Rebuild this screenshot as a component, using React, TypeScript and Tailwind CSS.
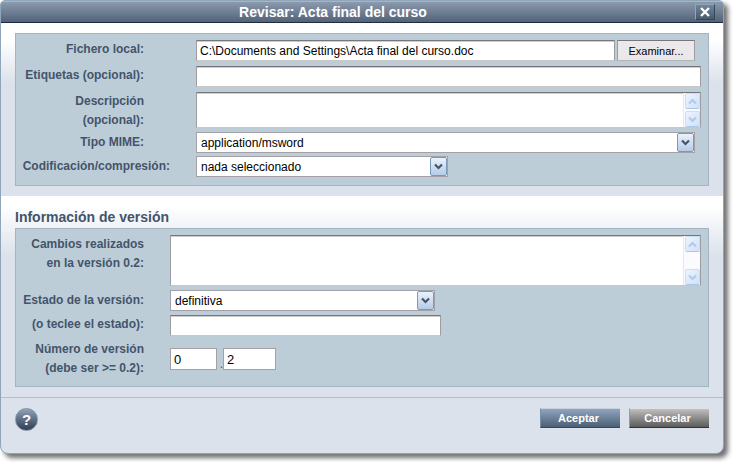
import React, { useState } from 'react'

const fieldClass =
  'block bg-white border border-t-[#77777b] border-l-[#9d9da1] border-r-[#9d9da1] border-b-[#c9c6c3] rounded-none text-[12px] leading-[16px] text-black outline-none shadow-[inset_0_1px_0_#cfccc9]'

const boxClass = 'border border-[#a3b5c3] bg-[#bdcdd7]'

const labelClass = 'shrink-0 pl-1 text-right text-[12px] leading-[19px] font-bold text-[#43546b]'

const versionClass =
  'h-[22px] border border-[#a3a1a5] bg-white px-[3px] text-[13px] leading-4 text-black outline-none'

function Chevron({ up = false, color }: { up?: boolean; color: string }) {
  return (
    <svg width="9" height="7" viewBox="0 0 9 7" fill="none" aria-hidden="true">
      <path d={up ? 'M1 5.5 4.5 2 8 5.5' : 'M1 1.5 4.5 5 8 1.5'} stroke={color} strokeWidth="2.2" />
    </svg>
  )
}

interface SelectProps {
  id: string
  options: string[]
  className: string
}

function Select({ id, options, className }: SelectProps) {
  return (
    <div className={`relative ${className}`}>
      <select
        id={id}
        className="block h-[21px] w-full appearance-none rounded-none border border-[#a3a1a5] bg-white pr-5 pl-1 text-[12px] leading-[16px] text-black outline-none"
      >
        {options.map((o) => (
          <option key={o}>{o}</option>
        ))}
      </select>
      <span className="pointer-events-none absolute top-px right-px flex h-[19px] w-[17px] items-center justify-center rounded-[2px] border border-[#7b98b9] bg-linear-to-b from-[#eaf2fd] to-[#b4cbe8]">
        <Chevron color="#485465" />
      </span>
    </div>
  )
}

function ScrollButton({ up = false }: { up?: boolean }) {
  return (
    <span className="flex h-4 w-[15px] items-center justify-center rounded-[2px] border border-[#cbdef5] border-b-[#abc8e8] bg-linear-to-br from-[#edf4ff] to-[#cfe1fa]">
      <Chevron up={up} color="#b3cae6" />
    </span>
  )
}

function TextArea({ id, className }: { id: string; className: string }) {
  return (
    <div className="relative min-w-0 flex-1">
      <textarea id={id} className={`${fieldClass} w-full resize-none pr-5 pl-1 ${className}`} />
      <span className="pointer-events-none absolute top-px right-px bottom-px flex w-[17px] flex-col items-center justify-between border-l border-[#dfe9f8] bg-[#f9fbff]">
        <ScrollButton up />
        <ScrollButton />
      </span>
    </div>
  )
}

export default function App() {
  const [file, setFile] = useState('C:\\Documents and Settings\\Acta final del curso.doc')

  return (
    <div className="overflow-hidden bg-white pr-[9px] pb-[9px] font-['Liberation_Sans',Arial,sans-serif]">
      <form
        className="overflow-hidden rounded-t-[5px] rounded-b-[8px] border border-[#8fa5ba] bg-[#dbe2eb] shadow-[4px_4px_5px_#707070]"
        onSubmit={(e) => e.preventDefault()}
      >
        <header className="flex h-[22px] items-center border-t border-b border-t-[#a9b5c4] border-b-[#1f2c3d] bg-linear-to-b from-[#8c9aae] to-[#526379] pr-2">
          <h1 className="flex-1 pr-[30px] text-center text-[14px] leading-5 font-bold text-white">
            Revisar: Acta final del curso
          </h1>
          <button
            type="button"
            aria-label="Cerrar"
            className="flex h-4 w-5 items-center justify-center border border-t-[#93a6b8] border-r-[#34475c] border-b-[#34475c] border-l-[#93a6b8] bg-linear-to-b from-[#71859a] to-[#465a70]"
          >
            <svg width="10" height="10" viewBox="0 0 10 10" aria-hidden="true">
              <path d="M1 1 9 9M9 1 1 9" stroke="#fff" strokeWidth="2.4" />
            </svg>
          </button>
        </header>

        <section className="bg-linear-to-b from-white from-10% to-[#dbe2eb] to-35% px-[14px] pt-[10px] pb-[10px]">
          <div className={`${boxClass} pt-[6px] pr-[7px] pb-2`}>
            <div className="mb-[5px] flex pr-[6px]">
              <label htmlFor="fichero" className={`${labelClass} w-[180px] pr-[52px]`}>
                Fichero local:
              </label>
              <input
                id="fichero"
                className={`${fieldClass} h-[21px] min-w-0 flex-1 px-[3px]`}
                value={file}
                onChange={(e) => setFile(e.target.value)}
              />
              <button
                type="button"
                className="ml-[2px] h-[21px] w-[78px] border border-t-[#77777b] border-r-[#9d9da1] border-b-[#b5b2b2] border-l-[#9d9da1] bg-[#ebe8ec] text-[11px] leading-4 text-black"
              >
                Examinar...
              </button>
            </div>
            <div className="mb-[5px] flex">
              <label htmlFor="etiquetas" className={`${labelClass} w-[180px] pr-[52px]`}>
                Etiquetas (opcional):
              </label>
              <input id="etiquetas" className={`${fieldClass} h-[21px] min-w-0 flex-1 px-[3px]`} />
            </div>
            <div className="mb-1 flex h-9">
              <label htmlFor="descripcion" className={`${labelClass} w-[180px] pr-[52px]`}>
                Descripción
                <br />
                (opcional):
              </label>
              <TextArea id="descripcion" className="h-9" />
            </div>
            <div className="mb-[3px] flex items-center pr-[6px]">
              <label htmlFor="mime" className={`${labelClass} w-[180px] pr-[52px]`}>
                Tipo MIME:
              </label>
              <Select id="mime" options={['application/msword']} className="min-w-0 flex-1" />
            </div>
            <div className="flex items-center">
              <label htmlFor="codificacion" className={`${labelClass} w-[180px] pr-[26px]`}>
                Codificación/compresión:
              </label>
              <Select id="codificacion" options={['nada seleccionado']} className="w-[252px]" />
            </div>
          </div>
        </section>

        <section className="bg-linear-to-b from-white from-5% to-[#dbe2eb] to-30% px-[14px] pt-[11px] pb-[10px]">
          <h2 className="mb-px text-[14px] leading-5 font-bold text-[#43546b]">
            Información de versión
          </h2>
          <div className={`${boxClass} pt-[6px] pr-[7px] pb-2`}>
            <div className="mb-1 flex">
              <label htmlFor="cambios" className={`${labelClass} w-[154px] pr-[26px]`}>
                Cambios realizados
                <br />
                en la versión 0.2:
              </label>
              <TextArea id="cambios" className="h-[51px]" />
            </div>
            <div className="mb-1 flex items-center">
              <label htmlFor="estado" className={`${labelClass} w-[154px] pr-[26px]`}>
                Estado de la versión:
              </label>
              <Select id="estado" options={['definitiva']} className="w-[265px]" />
            </div>
            <div className="mb-1 flex">
              <label htmlFor="otro-estado" className={`${labelClass} w-[154px] pr-[26px]`}>
                (o teclee el estado):
              </label>
              <input id="otro-estado" className={`${fieldClass} h-[21px] w-[271px] px-[3px]`} />
            </div>
            <div className="flex items-center">
              <label htmlFor="version-mayor" className={`${labelClass} w-[154px] pr-[26px]`}>
                Número de versión
                <br />
                (debe ser &gt;= 0.2):
              </label>
              <input id="version-mayor" defaultValue="0" className={`${versionClass} w-[47px]`} />
              <span className="w-[6px] self-end pb-[6px] text-right text-[12px] leading-4 text-[#43546b]">.</span>
              <input aria-label="Versión menor" defaultValue="2" className={`${versionClass} w-[53px]`} />
            </div>
          </div>
        </section>

        <footer className="flex h-[56px] items-start border-t border-[#b3bfce] px-[14px] pt-[10px]">
          <button
            type="button"
            aria-label="Ayuda"
            className="flex size-[23px] items-center justify-center rounded-full border border-[#7e8fa5] bg-linear-to-b from-[#94a2b6] via-[#5d6d83] to-[#323f51] text-[15px] leading-5 font-bold text-white"
          >
            ?
          </button>
          <div className="ml-auto flex gap-[9px]">
            <button
              type="submit"
              className="h-5 w-20 border-t border-b border-l border-t-[#c6d2e0] border-b-[#34475c] border-l-[#7890a8] bg-linear-to-b from-[#92a4bd] to-[#4b6077] pr-1 text-[11px] leading-4 font-bold text-white"
            >
              Aceptar
            </button>
            <button
              type="button"
              className="h-5 w-20 border-t border-b border-l border-t-[#e2e2e2] border-b-[#333333] border-l-[#9a9a9a] bg-linear-to-b from-[#c0c0c0] to-[#5c5c5c] pr-1 text-[11px] leading-4 font-bold text-white"
            >
              Cancelar
            </button>
          </div>
        </footer>
      </form>
    </div>
  )
}
